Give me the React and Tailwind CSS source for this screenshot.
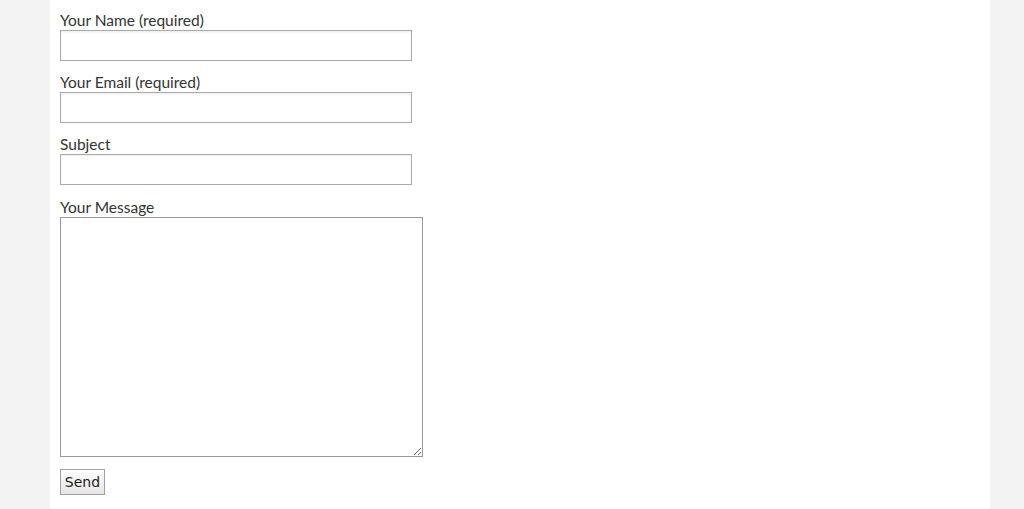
export default function App() {
  const fields = ["Your Name (required)", "Your Email (required)", "Subject"];
  return (
    <div className="min-h-screen bg-[#f3f3f3]">
      <div className="ml-[50px] w-[940px] min-h-screen bg-white pl-[10px] pt-[10px]">
        <form className="flex flex-col items-start" style={{ fontFamily: "Lato, 'Open Sans', sans-serif" }}>
          {fields.map((f, i) => (
            <div key={f} className={`${i === 2 ? "mb-[12px]" : "mb-[11px]"} flex flex-col items-start`}>
              <label className="block h-[20px] text-[15.5px] leading-[21px] text-[#333]">{f}</label>
              <input type="text" className="h-[31px] w-[352px] border border-[#aaa] bg-white shadow-[inset_0_1px_2px_rgba(0,0,0,0.08)] outline-none" />
            </div>
          ))}
          <div className="mb-[12px] flex flex-col items-start">
            <label className="block h-[20px] text-[15.5px] leading-[21px] text-[#333]">Your Message</label>
            <textarea className="block h-[240px] w-[363px] border border-[#999] bg-white outline-none" />
          </div>
          <button
            type="button"
            className="h-[26px] w-[45px] border border-[#a0a0a0] bg-gradient-to-b from-[#fdfdfd] to-[#e6e6e6] text-[14px] text-[#222]"
            style={{ fontFamily: "'DejaVu Sans', sans-serif" }}
          >
            Send
          </button>
        </form>
      </div>
    </div>
  );
}
